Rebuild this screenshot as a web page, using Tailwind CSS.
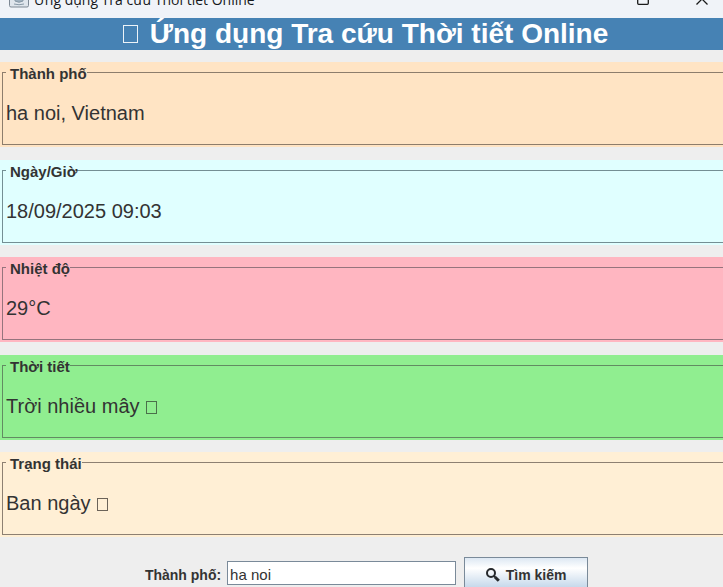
<!DOCTYPE html>
<html lang="vi">
<head>
<meta charset="utf-8">
<meta name="viewport" content="width=device-width, initial-scale=1">
<title>Ứng dụng Tra cứu Thời tiết Online</title>
<script src="https://cdn.jsdelivr.net/npm/@tailwindcss/browser@4"></script>
</head>
<body class="min-h-screen overflow-hidden bg-[#eeeeee] font-['Liberation_Sans',Arial,sans-serif] text-[#333333]">
<div class="flex h-[18px] items-end justify-between overflow-hidden bg-[#f0f3f8] pl-2 pr-[15px]">
  <div class="flex items-end gap-1">
    <svg class="mb-2.5 h-5 w-[22px] shrink-0" viewBox="0 0 22 20" fill="none" aria-hidden="true">
      <rect x="1.500" y="0.500" width="19" height="18.500" rx="1.500" fill="#dfe5ec" stroke="#7d8894"/>
      <path d="M7 10h8v3q-4 2.500-8 0z" fill="#9fb0be" stroke="#8798a6"/>
      <path d="M6 16q5 1.500 10 0" stroke="#8798a6"/>
      <path d="M11 9q-3-2 0-4t0-4" stroke="#c98368"/>
    </svg>
    <span class="pb-1.5 whitespace-nowrap font-['Open_Sans','Noto_Sans',sans-serif] text-sm leading-6 text-[#15171a]">Ứng dụng Tra cứu Thời tiết Online</span>
  </div>
  <div class="flex gap-[47px] pb-[13px]">
    <button type="button" aria-label="Phóng to" class="h-3 w-3"><svg class="h-3 w-3" viewBox="0 0 12 12" fill="none" stroke="#1a1a1a" stroke-width="1.300"><rect x="0.700" y="0.700" width="10.600" height="10.600" rx="1"/></svg></button>
    <button type="button" aria-label="Đóng" class="h-3 w-3"><svg class="h-3 w-3" viewBox="0 0 12 12" fill="none" stroke="#1a1a1a" stroke-width="1.300"><path d="M0.500 0.500l11 11M11.500 0.500l-11 11"/></svg></button>
  </div>
</div>
<header class="flex h-8 items-center justify-center gap-3 bg-[#4682b4] pl-2 text-white">
  <span class="h-[18px] w-[15px] border border-white/90" aria-hidden="true"></span>
  <h1 class="whitespace-nowrap text-[28px] leading-8 font-bold">Ứng dụng Tra cứu Thời tiết Online</h1>
</header>
<main>
  <section class="mt-3 overflow-hidden bg-[#ffe4c4] pb-0.5">
    <fieldset class="-mr-1 ml-0.5 h-[83px] border border-[#8d7d6c] pl-[3px]">
      <legend class="pt-1 pl-1 text-[15px] leading-4 font-bold">Thành phố</legend>
      <p class="mt-[19px] text-xl leading-6">ha noi, Vietnam</p>
    </fieldset>
  </section>
  <section class="mt-[13px] overflow-hidden bg-[#e0ffff] pb-0.5">
    <fieldset class="-mr-1 ml-0.5 h-[83px] border border-[#748f94] pl-[3px]">
      <legend class="pt-1 pl-1 text-[15px] leading-4 font-bold">Ngày/Giờ</legend>
      <p class="mt-[19px] text-xl leading-6">18/09/2025 09:03</p>
    </fieldset>
  </section>
  <section class="mt-3 overflow-hidden bg-[#ffb6c1] pb-0.5">
    <fieldset class="-mr-1 ml-0.5 h-[83px] border border-[#96747d] pl-[3px]">
      <legend class="pt-1 pl-1 text-[15px] leading-4 font-bold">Nhiệt độ</legend>
      <p class="mt-[19px] text-xl leading-6">29°C</p>
    </fieldset>
  </section>
  <section class="mt-[13px] overflow-hidden bg-[#90ee90] pb-0.5">
    <fieldset class="-mr-1 ml-0.5 h-[83px] border border-[#628b62] pl-[3px]">
      <legend class="pt-1 pl-1 text-[15px] leading-4 font-bold">Thời tiết</legend>
      <p class="mt-[19px] flex items-center gap-1.5 text-xl leading-6">Trời nhiều mây <span class="mt-0.5 h-[13px] w-[11px] border border-[#4a704a]" aria-hidden="true"></span></p>
    </fieldset>
  </section>
  <section class="mt-3 overflow-hidden bg-[#ffefd5] pb-0.5">
    <fieldset class="-mr-1 ml-0.5 h-[83px] border border-[#8d8072] pl-[3px]">
      <legend class="pt-1 pl-1 text-[15px] leading-4 font-bold">Trạng thái</legend>
      <p class="mt-[19px] flex items-center gap-1.5 text-xl leading-6">Ban ngày <span class="mt-0.5 h-[13px] w-[11px] border border-[#6b6359]" aria-hidden="true"></span></p>
    </fieldset>
  </section>
</main>
<form class="mt-5 flex items-center justify-center pl-2.5" onsubmit="return false">
  <label for="city" class="mr-1.5 whitespace-nowrap text-sm leading-6 font-bold">Thành phố:</label>
  <input id="city" type="text" value="ha noi" class="mr-2 mb-1 h-6 w-[229px] border border-[#7a8a99] bg-white px-0.5 pt-[3px] text-[15px]">
  <button type="submit" class="flex h-9 w-[124px] items-center justify-center gap-1.5 border border-[#7a8a99] bg-linear-to-b from-[#dde8f3] via-white via-30% to-[#b8cfe5] text-sm font-bold whitespace-nowrap">
    <svg class="h-3.5 w-3.5" viewBox="0 0 14 14" fill="none" stroke="#26292c" aria-hidden="true"><circle cx="5" cy="5" r="4" stroke-width="2"/><path d="M8 8l1.500 1.500" stroke-width="2"/><path d="M9.200 9.200l3.600 3.600" stroke-width="3"/></svg>
    Tìm kiếm
  </button>
</form>
</body>
</html>
